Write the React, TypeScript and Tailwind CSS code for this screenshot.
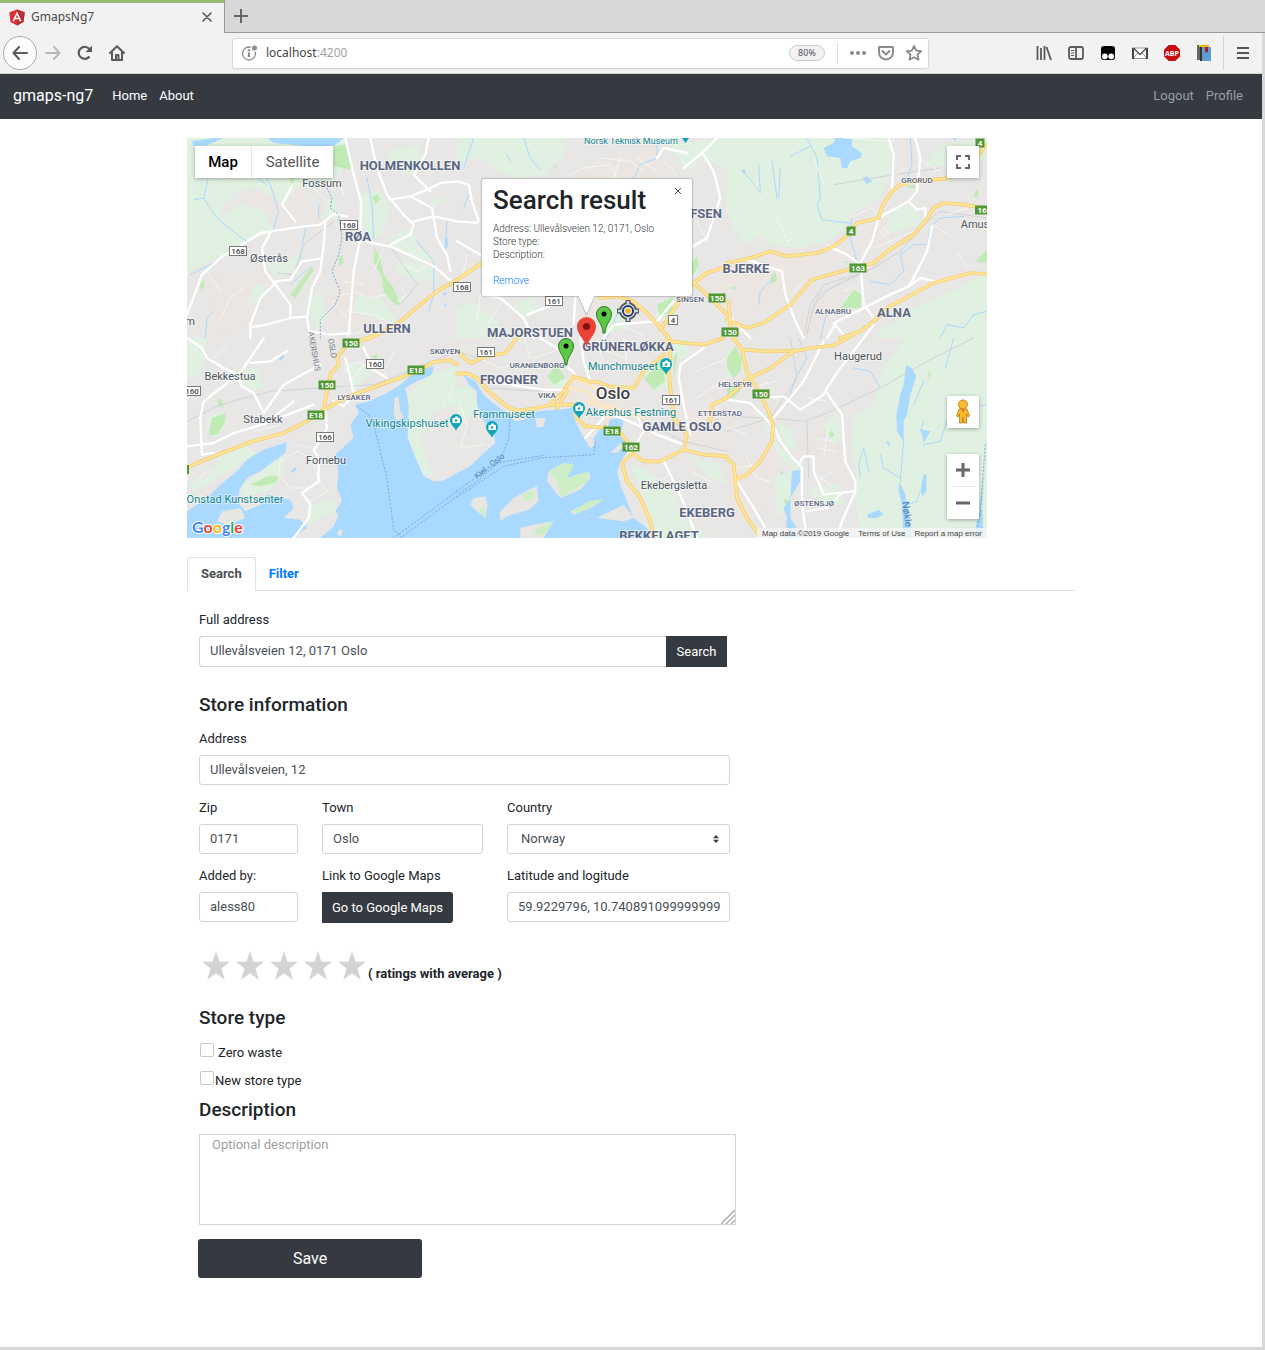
import React from "react";

/* ---------- Map data: each sheet is drawn at three units per pixel ---------- */

type Sheet = { x: number; y: number; d: string[] };

const greens: Sheet[] = [
  {
    x: 0,
    y: 0,
    d: [
      "M0,0 H480 L470,90 440,130 380,140 330,150 290,200 240,165 200,150 150,160 110,200 95,260 40,300 0,420Z",
      "M90,250 L160,200 230,215 260,280 210,300 150,330 70,370 0,400 0,330Z",
      "M600,40 L690,20 720,60 690,100 650,110Z M730,190 l30,-15 15,20 -40,10Z M235,375 L310,370 345,340 330,400 270,420Z M200,440 l30,0 10,30 -60,30Z M520,170 l60,-10 30,50 -30,80 -50,20Z M600,300 L670,270 690,320 740,370 700,380 620,330Z M510,470 l80,20 40,60 -70,-10 -60,-20Z M640,370 L730,385 760,420 700,430 620,400Z M440,160 L455,240 400,240Z M360,490 l40,-30 20,80 -30,40Z",
    ],
  },
  {
    x: 810,
    y: 0,
    d: [
      "M0,0 H330 L320,60 280,80 270,110 180,120 110,90 70,60 0,70Z",
      "M640,20 L810,0 V90 L780,80 740,60 690,100Z M0,510 L40,490 130,560 100,600 0,600Z M170,500 L230,475 250,520 200,540Z M430,520 L530,500 520,560 450,590Z M590,530 L650,480 660,520 640,560Z M690,370 l30,-20 5,50 -20,20Z",
    ],
  },
  {
    x: 1620,
    y: 0,
    d: [
      "M0,0 H490 L490,110 470,160 430,200 370,230 350,270 300,310 220,330 130,320 100,290 50,320 0,230Z",
      "M470,290 L580,260 570,200 500,210Z M350,480 L400,450 390,500 360,530Z M450,590 L560,510 700,450 780,400 V600 H440Z M590,80 L640,20 780,0 V60 L700,90Z",
    ],
  },
  {
    x: 0,
    y: 600,
    d: [
      "M60,240 L110,220 120,260 90,300 60,280Z M150,450 L230,400 300,340 290,400 260,450 180,480Z M0,430 L60,420 100,350 180,320 200,350 80,430 20,460Z M650,180 L730,110 810,80 V200 L740,220 700,300 740,420 700,400 665,310Z M360,510 L440,480 450,520 360,560Z M0,0 H60 L40,110 0,130Z M150,100 L210,90 230,150 180,160Z M470,80 L520,70 560,100 500,160Z",
    ],
  },
  {
    x: 810,
    y: 600,
    d: [
      "M0,150 L40,140 60,200 40,240 0,240Z M520,380 L560,390 650,460 680,540 760,600 600,600 570,500Z M560,110 L620,60 650,140 600,160Z M640,10 L690,0 700,60 650,60Z M690,350 L780,380 810,440 760,420Z M270,110 L310,90 330,140 290,150Z",
    ],
  },
  {
    x: 1620,
    y: 600,
    d: [
      "M380,240 L440,200 470,80 540,0 H780 V600 H400 L385,470 390,400 370,330Z",
      "M80,210 L130,270 160,330 230,380 200,400 150,340Z M0,20 L40,60 30,110 0,120Z M240,450 L330,440 360,500 280,500Z M140,420 L200,400 190,500 150,540Z M290,260 L330,220 350,310 310,320Z M150,250 l40,20 20,70 -40,-20Z",
    ],
  },
];

const parks: Sheet[] = [
  { x: 0, y: 0, d: ["M440,25 L475,20 495,95 440,85Z M560,325 L580,360 590,410 620,450 640,500 625,500 590,465 585,420 560,370Z M455,360 l12,-10 2,25 -12,12Z M310,470 L375,385 380,395 325,480Z M40,440 l12,-15 0,20 -12,12Z M555,180 l15,-12 10,15 -15,15Z M305,120 l20,0 -8,18Z"] },
  { x: 810, y: 0, d: ["M290,80 l10,5 -5,12Z M420,170 l20,-5 5,10 -20,5Z M700,380 l20,-25 5,30 -20,30Z M600,500 L650,475 645,520 610,540Z"] },
  { x: 1620, y: 0, d: ["M340,510 L380,455 405,470 400,510Z M740,175 l8,-20 8,5 -5,20Z M745,370 L780,335 V375Z M130,420 l15,-20 5,25 -15,15Z M5,450 l20,-5 0,10Z M540,145 l20,-5 5,10 -20,0Z M350,375 l10,-8 2,8Z"] },
  { x: 0, y: 600, d: ["M65,290 L75,240 115,225 115,250 90,290Z M190,440 L240,415 275,415 265,435 220,445Z M210,520 L270,500 270,530 225,540Z M555,55 l15,-8 0,15 -12,8Z M450,380 l10,0 0,40Z M90,180 l15,5 5,25 -15,-5Z"] },
  { x: 810, y: 600, d: ["M560,120 L600,85 610,60 625,130 590,155Z M650,130 L662,40 650,60Z M270,115 L300,80 325,120 290,140Z"] },
  { x: 1620, y: 600, d: ["M0,60 L25,25 45,60 40,100 20,120 0,90Z M0,145 L20,140 45,150 20,180 0,175Z M305,285 l10,-8 8,15 -12,8Z M155,400 l12,0 0,12Z M170,480 l15,10 -10,15Z M605,100 l8,8 -8,18Z"] },
];

const water: Sheet[] = [
  { x: 0, y: 0, d: ["M15,10 L80,0 110,0 60,22 20,24Z M240,0 L260,15 320,20 400,30 440,25 470,0Z M775,300 l8,0 -2,30 -8,-5Z M765,470 l12,-10 0,12Z M770,500 l10,-5 -5,12Z"] },
  { x: 1620, y: 0, d: ["M290,30 L320,15 325,0 375,0 375,25 405,45 400,60 370,70 360,90 345,90 340,60 300,55Z M405,120 l15,-5 15,15 -15,8Z M42,95 l14,0 -4,15Z M675,0 l12,0 0,10Z"] },
  {
    x: 0,
    y: 600,
    d: [
      "M505,200 L545,190 600,165 640,140 690,95 740,85 735,110 690,130 655,150 665,200 662,300 690,370 710,415 740,430 765,430 810,405 V600 H400 L440,565 455,530 445,520 465,490 450,450 455,400 445,350 500,300 490,260 515,225Z",
      "M300,312 L295,345 260,370 220,400 180,420 160,450 150,490 175,520 220,500 240,470 310,485 320,510 290,540 340,545 360,570 310,600 0,600 0,520 60,480 100,440 150,400 180,365 230,335Z",
      "M275,60 l12,-15 5,10 -12,15Z M310,400 l15,-12 5,3 -10,14Z",
    ],
  },
  {
    x: 810,
    y: 600,
    d: [
      "M20,110 L55,130 80,170 120,205 150,225 175,250 200,245 240,220 300,215 345,210 355,250 375,290 400,330 412,320 410,300 425,280 455,245 490,240 500,250 490,290 520,330 495,365 480,400 490,440 510,490 530,540 570,570 580,600 0,600 0,405 40,385 80,345 115,315 110,280 80,250 60,200 60,160 35,140Z",
    ],
  },
  {
    x: 1620,
    y: 600,
    d: ["M537,82 L555,90 568,115 550,170 540,230 530,250 530,310 510,280 508,230 520,170 530,140Z M582,275 L610,280 590,315Z M420,530 L455,515 470,530 450,540 425,540Z M517,430 L535,470 545,530 555,600 530,600 525,500 515,460Z M195,400 L218,395 220,430 190,480 190,540 210,570 210,600 175,600 180,540 170,510 190,480Z M590,410 l8,0 0,50 -12,15 -5,-20Z M755,525 L765,510 770,600 740,600Z M780,310 L765,500 755,525 770,420Z M478,310 l8,0 4,15 -8,-5Z"],
  },
];

const land: Sheet[] = [
  { x: 0, y: 600, d: ["M622,180 L635,175 640,220 650,235 630,250 620,230Z M455,575 l12,0 -5,20 -12,-5Z M105,520 L160,510 175,540 120,560 90,550Z"] },
  { x: 810, y: 600, d: ["M50,480 L85,475 92,500 85,540 60,520 40,500Z M130,520 L170,480 215,455 240,445 245,490 215,515 150,535 130,550Z M275,400 L320,375 350,380 330,420 395,400 400,420 370,455 310,480 270,430Z M340,520 L400,490 440,485 400,510 350,530Z M190,570 L230,560 290,550 260,600 190,600Z M460,345 L490,315 500,325 480,345Z M420,540 L500,500 530,540 500,550Z M235,240 l30,0 -5,25 -20,5Z"] },
];

const islandGreens: Sheet[] = [
  { x: 810, y: 600, d: ["M275,400 L320,375 350,380 330,420 395,400 390,430 340,465 310,475 300,430Z M345,520 L395,490 440,483 405,508 360,525Z M195,470 L230,455 235,480 205,490Z M240,570 L290,550 260,590 230,590Z M65,515 L80,505 85,540Z"] },
];

const urban: Sheet[] = [
  { x: 0, y: 0, d: ["M200,160 L330,150 400,240 300,255 200,250Z M450,380 L560,420 560,560 450,580Z M100,420 L220,400 180,560 60,600Z"] },
  { x: 810, y: 0, d: ["M330,120 L600,20 640,120 350,130Z M380,480 L440,490 430,600 370,600Z M710,430 L800,410 810,470 740,450Z"] },
  { x: 1620, y: 0, d: ["M0,380 L150,330 380,340 180,470 60,540 0,480Z M420,250 L560,230 480,330 410,330Z M280,490 L340,460 300,600 230,590Z"] },
  { x: 1620, y: 600, d: ["M0,380 L140,350 160,430 60,560 0,500Z M260,270 L350,290 340,420 250,340Z"] },
  { x: 810, y: 600, d: ["M320,120 L480,170 530,220 420,240 340,200Z M650,220 L810,200 V330 L700,320Z"] },
];

const streams: Sheet[] = [
  { x: 0, y: 0, d: ["M20,30 L70,90 50,180 20,185 M50,180 L90,240 150,290 180,310 90,370 10,410 M200,60 L250,140 275,220 260,270 M355,270 L340,360 M395,200 l0,40 M540,120 L555,200 560,300 M130,120 L200,110 240,140 M55,600 L60,540 80,520 M690,310 L740,370 740,470 725,520 M780,250 L775,330 790,400 M310,440 L365,390"] },
  { x: 810, y: 0, d: ["M50,0 L30,60 20,90 M200,0 L220,60 250,95 M150,50 l10,20 M600,0 L600,60 550,80 520,140 M450,600 L480,530 M40,160 l-20,50"] },
  { x: 1620, y: 0, d: ["M50,100 L100,165 95,80 M160,90 L155,180 M135,70 L150,180 M250,25 L190,55 M240,0 L270,60 280,180 270,200 285,245 370,255 M375,240 L370,300 390,370 M430,430 L490,440 530,400 520,350 560,320 600,320 610,270 640,240 710,235 M550,0 L555,80 540,120 M280,600 L300,520 M140,420 L100,460 95,500 M640,600 L660,560 710,570 740,530 780,520"] },
  { x: 1620, y: 600, d: ["M215,0 L240,60 205,120 180,200 M530,310 L520,430 M400,420 L395,380 410,330 425,400 M460,350 L470,390 520,420 M590,320 L640,310 670,220 780,200 M560,200 L590,130 M380,90 L430,100 460,150 M655,90 L680,0 M590,250 l-10,30 M580,460 L570,490 540,500"] },
];

const minorRoads: Sheet[] = [
  { x: 0, y: 0, d: ["M460,470 L510,465 550,480 600,470 M480,520 L560,530 620,560 M640,450 L660,470 630,490 M590,330 L560,400 M100,540 L130,480 170,450 M470,430 L530,440 M500,590 L560,560 M650,380 L690,400 720,380 M440,490 L480,540 M60,400 L100,460 M460,130 L470,170 M380,150 L420,190"] },
  { x: 810, y: 0, d: ["M340,110 L380,90 460,80 480,120 M390,100 L430,60 520,70 560,100 M470,120 L490,60 M540,60 L600,100 M620,70 L660,110 M30,350 L10,450 M70,470 L60,540 M480,560 L560,590 M720,250 L750,310 M130,500 L90,560"] },
  { x: 1620, y: 0, d: ["M170,270 L190,290 M150,240 L180,310 200,300 M370,240 L430,210 460,230 M460,280 l15,-10 10,15 -10,10Z M440,330 L560,280 M260,60 L290,140 M620,260 L680,300 M690,340 L720,390 M500,110 L540,90 M570,60 L640,100 M200,460 L240,420 M350,460 L390,440 M350,0 L500,10 M660,230 L720,210"] },
  { x: 0, y: 600, d: ["M280,370 L330,340 375,360 395,430 360,450 310,450 275,410Z M330,320 L370,330 M0,60 L40,20 M80,60 L120,20 M400,430 L420,460 370,490 M200,280 L280,260 M470,100 L510,70 550,90 M490,130 L530,80 M560,60 L600,110 M20,440 L70,390 M620,40 L600,90 M770,200 L800,150"] },
  { x: 810, y: 600, d: ["M200,0 L220,60 M230,60 L290,40 M60,60 L130,90 170,80 M420,0 L440,80 M450,40 L510,60 M500,0 L510,80 M720,100 L810,60 M720,180 L810,120 M710,240 L780,260 M10,200 L30,260 10,330 80,320 M580,440 L640,410 M700,400 L760,430"] },
  { x: 1620, y: 600, d: ["M270,300 L320,310 M270,330 L330,340 M300,290 L290,360 M30,390 L90,380 M60,360 L90,420 130,430 M240,180 L300,190 M320,400 L280,420 310,440 M10,270 L60,290 M60,150 L150,130"] },
];

const rails: Sheet[] = [
  { x: 0, y: 600, d: ["M0,250 L100,200 250,160 390,150 M390,150 L560,140 810,40"] },
  { x: 810, y: 600, d: ["M100,150 L250,160 M540,240 L680,310 810,340 M0,40 L60,60"] },
  { x: 1620, y: 600, d: ["M0,280 L130,240 230,250 300,225 460,150 600,70 740,0 M0,235 L130,240 210,120 190,0 M240,250 L245,420"] },
  { x: 1620, y: 0, d: ["M230,600 L250,500 290,440 420,400 520,340 600,250 640,220 780,240 M240,590 L260,500 310,450 460,380 M250,540 L275,470 420,395 M320,140 L500,110 640,90"] },
  { x: 0, y: 0, d: ["M270,405 L320,410 350,320 440,250 M610,325 L690,440 640,500"] },
];

const roads: Sheet[] = [
  { x: 0, y: 0, d: ["M0,530 L45,410 100,360 150,330 220,285 330,268 400,260 440,228 480,235", "M475,0 L500,110 522,190 520,300 500,400 485,590", "M415,250 L410,320 400,400 375,450 360,540 370,600", "M250,285 L225,330 235,400 265,440 310,500 310,540 360,535", "M265,435 L220,480 190,560 190,600 M310,540 L240,560 190,568 M265,430 L310,425 345,370 400,362", "M550,0 L570,90 600,170 650,230 680,260 670,290 610,320 M540,312 L610,325 720,375 740,385 800,435", "M610,185 L670,175 720,155 760,135 810,130 M680,250 L740,235 810,250 M670,175 L735,210 750,300 780,350 790,400", "M725,0 L715,50 680,110 730,160 M370,580 L430,590 490,585", "M325,250 L285,200 315,145"] },
  { x: 810, y: 0, d: ["M0,130 L35,140 45,190 65,250 M0,310 L70,350 M75,470 L130,480 200,540 230,600", "M680,90 L740,40 780,0 M740,50 L770,100 790,180 750,300 700,330 M0,250 L60,255 M355,480 L350,560 M600,60 L620,30 690,45", "M440,600 L470,560 600,550 650,490 M210,530 L290,500"] },
  { x: 1620, y: 0, d: ["M485,0 L500,50 495,155 M565,0 L580,60 570,160 545,190 570,215 595,210 595,240", "M545,190 L490,220 455,240 435,310 400,375 410,500 440,540 M305,325 L360,350 400,380", "M60,365 L165,400 175,470 205,550 230,600 M615,265 L600,340 570,400 545,445 490,470 420,505 330,550 300,600", "M545,445 L580,420 625,430 M440,560 L410,600 M0,530 L70,600 M320,555 L350,590"] },
  { x: 0, y: 600, d: ["M0,0 L45,30 60,60 110,90 M230,0 L160,105 50,190 40,240 45,350 80,345 M0,325 L80,315 140,285 225,260 380,200", "M110,90 L150,110 165,145 200,165 230,225 290,140 400,80 M190,75 L250,70 300,40 M415,220 L420,270 400,310 380,335 395,360 395,430 345,465 370,500 365,540 320,600", "M475,60 L490,120 500,170 470,205 440,190 M530,30 L560,95 600,120 M230,260 L320,190"] },
  { x: 810, y: 600, d: ["M250,0 L330,50 330,85 355,110 M370,0 L380,70 400,130 M100,130 L190,145 260,155 330,155", "M430,215 L540,260 600,290 680,320 M500,365 L530,330 560,280 540,230", "M620,370 L660,450 690,520 720,600 M740,30 L670,80 665,120 680,200 700,290 M385,300 L440,240"] },
  { x: 1620, y: 600, d: ["M0,185 L70,195 110,235 145,275 160,310 190,350 225,390 225,500 240,600", "M140,240 L230,130 290,10 M110,180 L170,175 220,215 290,170 300,150 340,90 410,0", "M300,165 L345,230 355,370 385,430 385,460 345,550 330,600 M215,380 L230,355 260,355 260,400 290,470 380,460", "M30,430 L80,510 115,570 M240,520 L300,510 345,465"] },
];

const highways: Sheet[] = [
  { x: 0, y: 0, d: ["M540,605 L590,580 640,550 700,500 750,460 810,425"] },
  { x: 810, y: 0, d: ["M0,425 L75,375", "M430,480 L480,475 530,490 570,525 610,570 640,605 M710,435 L760,480 810,530 M710,435 L750,405 810,385 M610,575 L660,500 710,435"] },
  { x: 1620, y: 0, d: ["M0,375 L70,360 130,340 180,355 270,345 320,325 360,295 390,255 455,240 465,205 495,160 520,140 560,130 655,122 720,90 780,20", "M0,545 L60,570 110,555 190,500 255,425 380,390 440,375 480,340 560,290 595,250 620,210 650,195 710,200 780,212", "M340,600 L400,580 440,550 480,510 620,435 730,405 780,408 M5,490 L10,560 20,605"] },
  { x: 0, y: 600, d: ["M0,388 L75,357 190,312 290,285 360,250 410,215 480,178 580,140 680,105 740,72 790,66 810,80", "M410,215 L420,160 430,110 455,80 450,60 475,25 520,8 565,-10"] },
  { x: 810, y: 600, d: ["M0,107 L35,107 60,120 100,165 150,205 180,218 230,212 280,200 350,200 360,240 385,265 440,268 490,285 510,310 525,345 560,370 610,370 680,335 740,350 810,355", "M280,200 L320,160 350,115 395,130 420,132 455,145 530,150 560,100 620,50 M300,210 L330,160 M680,335 L690,290 650,240 640,150 635,90 640,60 630,0", "M495,375 L510,430 550,480 580,550 590,600 M635,10 L740,20 800,0 M0,40 L40,75 90,55 145,45 180,0 M760,250 L765,200 810,180 M495,375 L525,345"] },
  { x: 1620, y: 600, d: ["M0,180 L60,125 130,90 200,40 250,30 320,22 380,-10 M20,0 L45,35 60,100 100,170 125,220 138,260 135,310 100,370 60,410 25,425", "M0,362 L20,380 25,425 30,480 60,540 95,590 M45,35 L120,40 200,38"] },
];

const ferries: Sheet[] = [
  { x: 0, y: 600, d: ["M510,205 L555,240 600,420 620,575 650,600 M620,600 L810,460 M640,600 L810,475"] },
  { x: 810, y: 600, d: ["M160,230 L155,300 130,370 60,430 0,470 M0,478 L140,385 250,360 410,350 415,310 M0,458 L120,375 260,352"] },
  { x: 1620, y: 600, d: ["M775,320 L760,520 745,600"] },
  { x: 0, y: 0, d: ["M420,150 L435,180 430,210 455,230 465,300 455,350 435,400 460,460 445,500 400,545 400,600"] },
];

function Layer({ sheets, ...rest }: { sheets: Sheet[] } & React.SVGProps<SVGGElement>) {
  return (
    <g {...rest}>
      {sheets.map((s, i) => (
        <g key={i} transform={`translate(${s.x} ${s.y})`}>
          {s.d.map((d, j) => (
            <path key={j} d={d} />
          ))}
        </g>
      ))}
    </g>
  );
}

type Label = [text: string, x: number, y: number, size: number];

const districts: Label[] = [
  ["HOLMENKOLLEN", 223, 32, 13], ["RØA", 171, 103, 13], ["ULLERN", 200, 195, 13], ["MAJORSTUEN", 343, 199, 13],
  ["FROGNER", 322, 246, 13], ["GRÜNERLØKKA", 441, 213, 13], ["GAMLE OSLO", 495, 293, 13], ["EKEBERG", 520, 379, 13],
  ["BEKKELAGET", 472, 402, 13], ["BJERKE", 559, 135, 13], ["ALNA", 707, 179, 13], ["FSEN", 519, 80, 13],
];
const suburbs: Label[] = [
  ["GRORUD", 730, 45, 8], ["ALNABRU", 646, 176, 8], ["SINSEN", 503, 164, 8], ["SKØYEN", 258, 216, 8], ["URANIENBORG", 350, 230, 8],
  ["VIKA", 360, 260, 8], ["LYSAKER", 167, 262, 8], ["HELSFYR", 548, 249, 8], ["ETTERSTAD", 533, 278, 8], ["ØSTENSJØ", 627, 368, 8],
];
const places: Label[] = [
  ["Fossum", 135, 49, 11], ["Østerås", 82, 124, 11], ["Bekkestua", 43, 242, 11], ["Stabekk", 76, 285, 11], ["Fornebu", 139, 326, 11],
  ["Haugerud", 671, 222, 11], ["Ekebergsletta", 487, 351, 11], ["Amus", 788, 90, 11], ["m", 3, 187, 11],
];
const sights: Label[] = [
  ["Norsk Teknisk Museum", 444, 6, 9], ["Munchmuseet", 436, 232, 11], ["Akershus Festning", 444, 278, 11], ["Frammuseet", 317, 280, 11],
  ["Vikingskipshuset", 220, 289, 11], ["Onstad Kunstsenter", 48, 365, 11],
];
const greenShields: Label[] = [
  ["150", 164, 205, 0], ["150", 140, 247, 0], ["E18", 129, 277, 0], ["E18", 229, 232, 0], ["150", 530, 160, 0], ["150", 543, 194, 0],
  ["150", 574, 256, 0], ["163", 671, 130, 0], ["4", 664, 93, 0], ["4", 793, 5, 0], ["16", 795, 72, 0], ["E18", 425, 293, 0], ["162", 444, 309, 0],
];
const whiteShields: Label[] = [
  ["168", 162, 87, 0], ["168", 51, 113, 0], ["168", 275, 149, 0], ["161", 367, 163, 0], ["161", 299, 214, 0], ["4", 486, 182, 0],
  ["161", 484, 262, 0], ["160", 188, 226, 0], ["160", 5, 253, 0], ["166", 138, 299, 0],
];

function Labels({ items, ...rest }: { items: Label[] } & React.SVGProps<SVGGElement>) {
  return (
    <g textAnchor="middle" paintOrder="stroke" stroke="#fff" strokeOpacity="0.5" strokeWidth="2" strokeLinejoin="round" {...rest}>
      {items.map(([t, x, y, s]) => (
        <text key={t} x={x} y={y} fontSize={s}>
          {t}
        </text>
      ))}
    </g>
  );
}

function Shields({ items, green }: { items: Label[]; green?: boolean }) {
  return (
    <g fontSize="8" fontWeight={green ? 700 : 500} textAnchor="middle">
      {items.map(([t, x, y], i) => {
        const w = t.length > 2 ? 17 : t.length > 1 ? 14 : 9;
        return (
          <g key={i}>
            <rect x={x - w / 2} y={y - 4.5} width={w} height="9" fill={green ? "#4f9833" : "#fff"} stroke={green ? "none" : "#777"} />
            <text x={x} y={y + 3} fill={green ? "#fff" : "#444"}>
              {t}
            </text>
          </g>
        );
      })}
    </g>
  );
}

function SightPin({ x, y }: { x: number; y: number }) {
  return (
    <g transform={`translate(${x} ${y})`}>
      <path d="M0,10 C-1,6 -6,4 -6,-1 A6,6 0 1 1 6,-1 C6,4 1,6 0,10Z" fill="#12a5b8" />
      <path d="M-3.5,-3 h2 l1,-1.5 h2 l1,1.5 h1.5 v5 h-7.500Z" fill="#fff" />
      <circle cy="-0.500" r="1.300" fill="#12a5b8" />
    </g>
  );
}

function GreenPin({ x, y }: { x: number; y: number }) {
  return (
    <g transform={`translate(${x} ${y})`}>
      <path d="M-1,0 C-1,-9 -7.500,-12 -7.500,-19 A7.500,7.500 0 1 1 7.500,-19 C7.500,-12 1,-9 1,0Z" fill="#5cc847" stroke="#2f7a22" />
      <circle cy="-19" r="2.500" fill="#000" />
    </g>
  );
}

function MapDrawing() {
  return (
    <svg className="block h-full w-full" viewBox="0 0 800 400" preserveAspectRatio="xMinYMin slice" fontFamily="Roboto, sans-serif" role="img" aria-label="Map of Oslo">
      <rect width="800" height="400" fill="#e8e7e6" />
      <g transform="scale(0.333333)" fill="none" strokeLinejoin="round" strokeLinecap="round">
        <Layer sheets={urban} fill="#ebe6e1" />
        <Layer sheets={greens} fill="#e0f1e1" />
        <Layer sheets={parks} fill="#c0ebb4" />
        <Layer sheets={water} fill="#a9d9fe" />
        <Layer sheets={land} fill="#e8e6e2" />
        <Layer sheets={islandGreens} fill="#cdeec6" />
        <Layer sheets={streams} stroke="#a9d9fe" strokeWidth="3" />
        <Layer sheets={rails} stroke="#d2d2d4" strokeWidth="3" />
        <Layer sheets={minorRoads} stroke="#f8f6f3" strokeWidth="3" />
        <Layer sheets={roads} stroke="#fff" strokeWidth="7" />
        <path d="M1130,745 l70,15 60,60 110,15 20,50 M1150,720 l80,30 M1240,760 l90,20 M1200,790 l120,30 M1270,800 l-10,60" stroke="#fbe8c0" strokeWidth="8" />
        <Layer sheets={highways} stroke="#f3cc6c" strokeWidth="11" />
        <Layer sheets={highways} stroke="#ffe396" strokeWidth="7" />
        <Layer sheets={ferries} stroke="#7ea8d8" strokeWidth="3" strokeDasharray="4 7" />
      </g>
      <Labels items={districts} fill="#5b6682" fontWeight="700" />
      <Labels items={suburbs} fill="#5b6682" fontWeight="500" />
      <Labels items={places} fill="#4c535e" />
      <Labels items={sights} fill="#12858f" />
      <text x="426" y="261" textAnchor="middle" fontSize="17" fontWeight="500" fill="#3a3f46" stroke="#fff" strokeWidth="2" paintOrder="stroke">
        Oslo
      </text>
      <g fontSize="8" fill="#4e7fb5">
        <text transform="translate(290 341) rotate(-38)">Kiel - Oslo</text>
        <text transform="translate(715 364) rotate(82)" fontSize="10">Nøkle</text>
        <text transform="translate(141 201) rotate(80)" fill="#7b7f88">OSLO</text>
        <text transform="translate(121 194) rotate(80)" fill="#7b7f88">AKERSHUS</text>
      </g>
      <Shields items={greenShields} green />
      <Shields items={whiteShields} />
      <rect y="327" width="2" height="9" fill="#4f9833" />
      <SightPin x={479} y={227} />
      <SightPin x={392} y={271} />
      <SightPin x={305} y={290} />
      <SightPin x={269} y={283} />
      <path d="M495,0 h7 l-3.500,5Z" fill="#12a5b8" />
      <GreenPin x={417} y={195} />
      <GreenPin x={379} y={227} />
      <g transform="translate(441 173)" fill="none">
        <path d="M0,-11 V-6 M0,6 V11 M-11,0 H-6 M6,0 H11" stroke="#4e555c" strokeWidth="5" />
        <circle r="8" fill="#f1f3f5" stroke="#4e555c" strokeWidth="2" />
        <path d="M0,-10 V-5 M0,5 V10 M-10,0 H-5 M5,0 H10" stroke="#d6dade" strokeWidth="2.500" />
        <circle r="5" stroke="#20396a" strokeWidth="2" />
        <circle r="2.800" fill="#f4ac2c" />
      </g>
      <path d="M399.500,210 C399,202 390,197 390,188.500 A9.500,9.500 0 1 1 409,188.500 C409,197 400,202 399.500,210Z" fill="#ea4335" />
      <circle cx="399.500" cy="188.500" r="3.600" fill="#811411" />
      <path d="M391,157 L399.500,177 408,157Z" fill="#fff" stroke="#aaa" strokeWidth="1" />
      <text x="5" y="395" fontSize="16" fontFamily="Lato, sans-serif" fontWeight="700" stroke="#fff" strokeWidth="2" paintOrder="stroke">
        <tspan fill="#4285f4">G</tspan>
        <tspan fill="#ea4335">o</tspan>
        <tspan fill="#fbbc05">o</tspan>
        <tspan fill="#4285f4">g</tspan>
        <tspan fill="#34a853">l</tspan>
        <tspan fill="#ea4335">e</tspan>
      </text>
    </svg>
  );
}

const mapCard = "absolute bg-white shadow-[0_1px_4px_rgba(0,0,0,0.3)]";

function MapPanel() {
  return (
    <section className="relative h-[400px] w-full max-w-[800px] overflow-hidden">
      <MapDrawing />
      <div className={`${mapCard} top-2 left-2 flex h-8 text-[15px]`}>
        <button className="w-14 font-medium text-black">Map</button>
        <button className="w-[82px] border-l border-gray-200 text-[#565656]">Satellite</button>
      </div>
      <button aria-label="Full screen" className={`${mapCard} top-2 right-2 flex size-8 items-center justify-center`}>
        <svg width="14" height="14" viewBox="0 0 14 14" fill="none" stroke="#666" strokeWidth="2">
          <path d="M1 5V1H5M9 1H13V5M13 9V13H9M5 13H1V9" />
        </svg>
      </button>
      <button aria-label="Street view" className={`${mapCard} right-2 bottom-[110px] flex size-8 items-center justify-center`}>
        <svg width="16" height="26" viewBox="0 0 16 26" fill="#fbb829" stroke="#b57a1c" strokeWidth="0.800">
          <path d="M4 10 Q8 8 12 10 L14.500 17 13 18 11.500 15 11.500 24 8.700 24 8 18 7.300 24 4.500 24 4.500 15 3 18 1.500 17Z" />
          <circle cx="8" cy="5.500" r="4.500" />
          <path d="M6 10.500h4l-2 3z" fill="#e06a1b" stroke="none" />
        </svg>
      </button>
      <div className={`${mapCard} right-2 bottom-[19px] flex w-8 flex-col items-center`}>
        <button aria-label="Zoom in" className="flex h-8 w-full items-center justify-center">
          <svg width="14" height="14" viewBox="0 0 14 14" stroke="#666" strokeWidth="3">
            <path d="M0 7H14M7 0V14" />
          </svg>
        </button>
        <hr className="w-6 border-gray-200" />
        <button aria-label="Zoom out" className="flex h-8 w-full items-center justify-center">
          <svg width="14" height="14" viewBox="0 0 14 14" stroke="#666" strokeWidth="3">
            <path d="M0 7H14" />
          </svg>
        </button>
      </div>
      <div className="absolute top-[41px] left-[295px] h-[117px] w-[210px] rounded-xs bg-white px-[11px] pt-1.5 text-[10px] leading-[13px] font-light text-[#333] shadow-[0_0_2px_rgba(0,0,0,0.6)]">
        <h1 className="mb-[6px] text-[26px] leading-[31px] font-medium text-[#212529]">Search result</h1>
        <p>Address: Ullevålsveien 12, 0171, Oslo</p>
        <p>Store type:</p>
        <p>Description:</p>
        <a href="#remove" className="mt-[13px] block text-[#007bff]">
          Remove
        </a>
        <button aria-label="Close" className="absolute top-2 right-2.5">
          <svg width="8" height="8" viewBox="0 0 8 8" stroke="#555">
            <path d="M1 1L7 7M7 1L1 7" />
          </svg>
        </button>
      </div>
      <svg className="absolute top-[157px] left-[390px]" width="19" height="21" viewBox="0 0 19 21">
        <path d="M1 0L9.500 19L18 0Z" fill="#fff" />
      </svg>
      <div className="absolute right-0 bottom-0 flex h-[10px] gap-[9px] bg-[#f5f5f5]/80 px-[5px] font-['Liberation_Sans'] text-[8px] leading-[11px] text-[#444]">
        <span>Map data ©2019 Google</span>
        <a href="#terms">Terms of Use</a>
        <a href="#report">Report a map error</a>
      </div>
    </section>
  );
}

/* ---------- Browser frame ---------- */

function TabStrip() {
  return (
    <div className="flex h-[33px] border-b border-[#999] bg-[#d8d8d8]">
      <div className="-mb-px flex w-[225px] items-center border-t-[3px] border-r border-t-[#97bb72] border-r-[#999] bg-[#f2f2f2] pr-2.5 pb-0.5 pl-[9px]">
        <svg width="16" height="17" viewBox="0 0 16 17">
          <path d="M8 0.500L15.700 3.200 14.500 13 8 16.500 1.500 13 0.300 3.200Z" fill="#dd2f33" />
          <path d="M8 0.500L15.700 3.200 14.500 13 8 16.500Z" fill="#b52e31" />
          <path d="M8 2.500L3.400 12.300H5.200L6.100 10.200H9.900L10.800 12.300H12.600ZM8 5.800L9.300 8.700H6.700Z" fill="#fff" fillRule="evenodd" />
        </svg>
        <span className="ml-1.5 flex-1 font-['Noto_Sans'] text-xs text-[#4a4a4a]">GmapsNg7</span>
        <button aria-label="Close tab" className="p-0.5">
          <svg width="10" height="10" viewBox="0 0 10 10" stroke="#555" strokeWidth="1.600" strokeLinecap="round">
            <path d="M1 1L9 9M9 1L1 9" />
          </svg>
        </button>
      </div>
      <button aria-label="New tab" className="px-[9px]">
        <svg width="14" height="14" viewBox="0 0 14 14" stroke="#6b6560" strokeWidth="2">
          <path d="M0 7H14M7 0V14" />
        </svg>
      </button>
    </div>
  );
}

const toolButton = "flex size-8 shrink-0 items-center justify-center";

function Toolbar() {
  return (
    <div className="flex h-[41px] items-center border-b border-[#d4d4d4] bg-[#f2f2f2] pl-[3px]">
      <button aria-label="Back" className="flex size-[34px] items-center justify-center rounded-full border border-[#aaa] bg-[#fcfcfc]">
        <svg width="16" height="14" viewBox="0 0 16 14" fill="none" stroke="#5a5a5a" strokeWidth="2" strokeLinecap="round" strokeLinejoin="round">
          <path d="M15 7H1.500M7 1L1.500 7L7 13" />
        </svg>
      </button>
      <button aria-label="Forward" className={toolButton}>
        <svg width="16" height="14" viewBox="0 0 16 14" fill="none" stroke="#b8b8b8" strokeWidth="2" strokeLinecap="round" strokeLinejoin="round">
          <path d="M1 7H14.500M9 1L14.500 7L9 13" />
        </svg>
      </button>
      <button aria-label="Reload" className={toolButton}>
        <svg width="16" height="16" viewBox="0 0 16 16" fill="none" stroke="#5a5a5a" strokeWidth="2.200">
          <path d="M12.500 11.500A6 6 0 1 1 13 5" />
          <path d="M15 0.500V7H8.500Z" fill="#5a5a5a" stroke="none" />
        </svg>
      </button>
      <button aria-label="Home" className={toolButton}>
        <svg width="16" height="16" viewBox="0 0 16 16" fill="none" stroke="#5a5a5a" strokeWidth="2" strokeLinejoin="round" strokeLinecap="round">
          <path d="M1 8L8 1.200L15 8M3 7.500V15H13V7.500" />
          <path d="M7 15V10H9.500V15" strokeWidth="2" />
        </svg>
      </button>
      <div className="mr-[99px] ml-[99px] flex h-[31px] flex-1 items-center rounded-[3px] border border-[#d8d8d8] bg-white pr-1.5 pl-2 shadow-xs">
        <svg width="18" height="18" viewBox="0 0 18 18" fill="none" stroke="#8c8c8c" strokeWidth="1.300">
          <circle cx="8" cy="9.500" r="6.500" />
          <path d="M8 8.500V13" strokeWidth="2" />
          <circle cx="8" cy="6.300" r="1.200" fill="#8c8c8c" stroke="none" />
          <circle cx="13.500" cy="4" r="3.200" fill="#8c8c8c" stroke="#fff" />
        </svg>
        <div className="ml-[7px] flex-1 font-['Noto_Sans'] text-xs text-[#444]">
          localhost<span className="text-[#a2a2a2]">:4200</span>
        </div>
        <button className="h-4 w-9 rounded-full border border-[#ccc] bg-[#f2f2f2] font-['Noto_Sans'] text-[9px] leading-[14px] text-[#555]">80%</button>
        <span className="mx-3 h-[22px] w-px bg-[#ddd]" />
        <button aria-label="Page actions">
          <svg width="16" height="16" viewBox="0 0 16 16" fill="#8a8a8a">
            <circle cx="2" cy="8" r="2" />
            <circle cx="8" cy="8" r="2" />
            <circle cx="14" cy="8" r="2" />
          </svg>
        </button>
        <button aria-label="Save to Pocket" className="ml-3">
          <svg width="16" height="16" viewBox="0 0 16 16" fill="none" stroke="#8a8a8a" strokeWidth="1.900" strokeLinecap="round" strokeLinejoin="round">
            <path d="M1 2H15V7.500A7 7 0 0 1 1 7.500Z" />
            <path d="M4.500 6L8 9.500L11.500 6" />
          </svg>
        </button>
        <button aria-label="Bookmark" className="ml-3">
          <svg width="16" height="16" viewBox="0 0 16 16" fill="none" stroke="#8a8a8a" strokeWidth="1.800" strokeLinejoin="round">
            <path d="M8 1L10.200 5.600 15.200 6.200 11.500 9.700 12.500 14.700 8 12.200 3.500 14.700 4.500 9.700 0.800 6.200 5.800 5.600Z" />
          </svg>
        </button>
      </div>
      <button aria-label="Library" className={toolButton}>
        <svg width="16" height="16" viewBox="0 0 16 16" fill="none" stroke="#5a5a5a" strokeWidth="1.800">
          <path d="M1.500 1V15M5 3V15M8.500 1V15M10.500 2L15 15" />
        </svg>
      </button>
      <button aria-label="Sidebars" className={toolButton}>
        <svg width="16" height="16" viewBox="0 0 16 16" fill="none" stroke="#5a5a5a" strokeWidth="1.800">
          <rect x="1" y="2" width="14" height="12" rx="2" />
          <path d="M8 2V14" />
          <path d="M3 5.500H6M3 8H6M3 10.500H6" strokeWidth="1" />
        </svg>
      </button>
      <button aria-label="Reader extension" className={toolButton}>
        <svg width="16" height="16" viewBox="0 0 16 16">
          <rect x="1" y="1" width="14" height="14" rx="3" />
          <circle cx="4.800" cy="11.300" r="2.900" fill="#fff" />
          <circle cx="11.200" cy="11.300" r="2.900" fill="#fff" />
        </svg>
      </button>
      <button aria-label="Mail" className={toolButton}>
        <svg width="16" height="16" viewBox="0 0 16 16" fill="none">
          <rect x="1" y="3" width="14" height="10.500" fill="#fff" stroke="#999" />
          <path d="M1 13L6 8M15 13L10 8" stroke="#999" />
          <path d="M1 14V3M15 14V3" stroke="#444" strokeWidth="2" />
          <path d="M1.500 3L8 9.500L14.500 3" stroke="#555" strokeWidth="1.500" />
        </svg>
      </button>
      <button aria-label="Adblock Plus" className={toolButton}>
        <svg width="16" height="16" viewBox="0 0 16 16">
          <path d="M4.700 0H11.300L16 4.700V11.300L11.300 16H4.700L0 11.300V4.700Z" fill="#c70d0d" />
          <text x="8" y="10.700" textAnchor="middle" fontSize="7" fontWeight="700" fontFamily="Open Sans, sans-serif" fill="#fff">
            ABP
          </text>
        </svg>
      </button>
      <button aria-label="Bookmarks extension" className={toolButton}>
        <svg width="16" height="16" viewBox="0 0 16 16">
          <rect x="1" y="0" width="3" height="15" fill="#666" />
          <rect x="4" y="2" width="2" height="14" fill="#333" />
          <rect x="6" y="2" width="9" height="14" fill="#5a9fd0" />
          <rect x="3" y="0" width="10" height="2" fill="#f0b90b" />
          <path d="M9 2H12V8L10.500 6.500L9 8Z" fill="#b0182a" />
        </svg>
      </button>
      <span className="mx-[3px] h-[34px] w-px bg-[#d5d5d5]" />
      <button aria-label="Menu" className={toolButton}>
        <svg width="12" height="12" viewBox="0 0 12 12" stroke="#555" strokeWidth="2">
          <path d="M0 1H12M0 6H12M0 11H12" />
        </svg>
      </button>
      <span className="w-[3px]" />
    </div>
  );
}

/* ---------- Form ---------- */

const control = "block h-[30px] w-full rounded-[3px] border border-[#ced4da] bg-white pr-1 pb-px pl-2.5 text-[13px] text-[#495057]";
const dark = "bg-[#343a40] text-white";
const heading = "text-[19px] leading-6 font-medium";

function Field({ id, label, children }: { id: string; label: string; children: React.ReactNode }) {
  return (
    <div>
      <label htmlFor={id} className="mb-1.5 block">
        {label}
      </label>
      {children}
    </div>
  );
}

function Star() {
  return (
    <svg width="28" height="29" viewBox="0 0 28 28" preserveAspectRatio="none" fill="#d3d3d3" className="block">
      <path d="M14 0L17.400 10.300H28L19.500 17L22.900 28L14 21.500L5.100 28L8.500 17L0 10.300H10.600Z" />
    </svg>
  );
}

const checkbox = "size-[14px] appearance-none rounded-[2px] border border-[#c8c8c8] bg-white";

export default function App() {
  return (
    <div className="flex min-h-screen flex-col bg-[#d8d8d8] pb-[3px] font-[Roboto,sans-serif] text-[13px] leading-5 text-[#212529]">
      <TabStrip />
      <div className="mr-[3px] flex flex-1 flex-col bg-white">
        <Toolbar />
        <nav className={`flex h-[45px] items-center pr-[19px] pb-px pl-[13px] ${dark}`}>
          <a href="#top" className="mr-[19px] text-base">
            gmaps-ng7
          </a>
          <a href="#home" className="mr-3">
            Home
          </a>
          <a href="#about">About</a>
          <a href="#logout" className="mr-3 ml-auto text-[#9a9da0]">
            Logout
          </a>
          <a href="#profile" className="text-[#9a9da0]">
            Profile
          </a>
        </nav>
        <main className="mx-auto w-full max-w-[912px] px-3 pt-[19px] pb-12">
          <MapPanel />
          <div className="mt-[19px] flex h-[34px] border-b border-[#dee2e6] font-bold">
            <a href="#search" className="-mb-px rounded-t-[3px] border border-b-0 border-[#dee2e6] bg-white px-[13px] pt-1.5 text-[#495057]">
              Search
            </a>
            <a href="#filter" className="px-[13px] pt-[7px] text-[#007bff]">
              Filter
            </a>
          </div>
          <form className="max-w-[555px] px-3 pt-[19px]" onSubmit={(e) => e.preventDefault()}>
            <Field id="full" label="Full address">
              <div className="mr-[3px] flex">
                <input id="full" defaultValue="Ullevålsveien 12, 0171 Oslo" className="h-[31px] min-w-0 flex-1 rounded-l-[3px] border border-r-0 border-[#ced4da] px-2.5 pb-0.5 text-[#495057]" />
                <button className={`w-[61px] ${dark}`}>Search</button>
              </div>
            </Field>
            <h2 className={`mt-[26px] mb-3 ${heading}`}>Store information</h2>
            <Field id="address" label="Address">
              <input id="address" defaultValue="Ullevålsveien, 12" className={control} />
            </Field>
            <div className="mt-[13px] grid grid-cols-[99fr_161fr_223fr] gap-x-6 gap-y-3">
              <Field id="zip" label="Zip">
                <input id="zip" defaultValue="0171" className={control} />
              </Field>
              <Field id="town" label="Town">
                <input id="town" defaultValue="Oslo" className={control} />
              </Field>
              <Field id="country" label="Country">
                <div className="relative">
                  <select id="country" className="block h-[30px] w-full appearance-none rounded-[3px] border border-[#ced4da] bg-white px-[13px] text-[13px] text-[#495057]">
                    <option>Norway</option>
                  </select>
                  <svg className="pointer-events-none absolute top-[11px] right-[11px]" width="6" height="8" viewBox="0 0 6 8" fill="#343a40">
                    <path d="M3 0L6 3.300H0ZM3 8L6 4.700H0Z" />
                  </svg>
                </div>
              </Field>
              <Field id="added" label="Added by:">
                <input id="added" defaultValue="aless80" className={control} />
              </Field>
              <Field id="link" label="Link to Google Maps">
                <button id="link" className={`h-[31px] rounded-r-[3px] px-2.5 whitespace-nowrap ${dark}`}>
                  Go to Google Maps
                </button>
              </Field>
              <Field id="latlng" label="Latitude and logitude">
                <input id="latlng" defaultValue="59.9229796, 10.740891099999999" className={control} />
              </Field>
            </div>
            <div className="mt-7 ml-[3px] flex items-end">
              {[1, 2, 3, 4, 5].map((n) => (
                <button key={n} aria-label={`Rate ${n}`} className="mr-1.5">
                  <Star />
                </button>
              ))}
              <b className="-mb-1 -ml-1">( ratings with average )</b>
            </div>
            <h2 className={`mt-[26px] mb-[13px] ${heading}`}>Store type</h2>
            <div className="ml-px flex gap-1">
              <input type="checkbox" id="zero" className={checkbox} />
              <label htmlFor="zero">Zero waste</label>
            </div>
            <div className="mt-2 ml-px flex gap-px">
              <input type="checkbox" id="new" className={checkbox} />
              <label htmlFor="new">New store type</label>
            </div>
            <h2 className={`mt-[7px] mb-3 ${heading}`}>
              <label htmlFor="description">Description</label>
            </h2>
            <div className="relative -mr-1.5">
              <textarea id="description" placeholder="Optional description" className="block h-[91px] w-full resize-none border border-[#d3d3d3] px-3 text-[13px] leading-5 placeholder:text-[#a0a0a0]" />
              <svg className="pointer-events-none absolute right-px bottom-px" width="14" height="14" viewBox="0 0 14 14" stroke="#aaa" strokeWidth="1.400">
                <path d="M0 14L14 0M5 14L14 5M10 14L14 10" />
              </svg>
            </div>
            <button className={`mt-[14px] -ml-px h-[39px] w-56 rounded-[3px] text-base ${dark}`}>Save</button>
          </form>
        </main>
      </div>
    </div>
  );
}
